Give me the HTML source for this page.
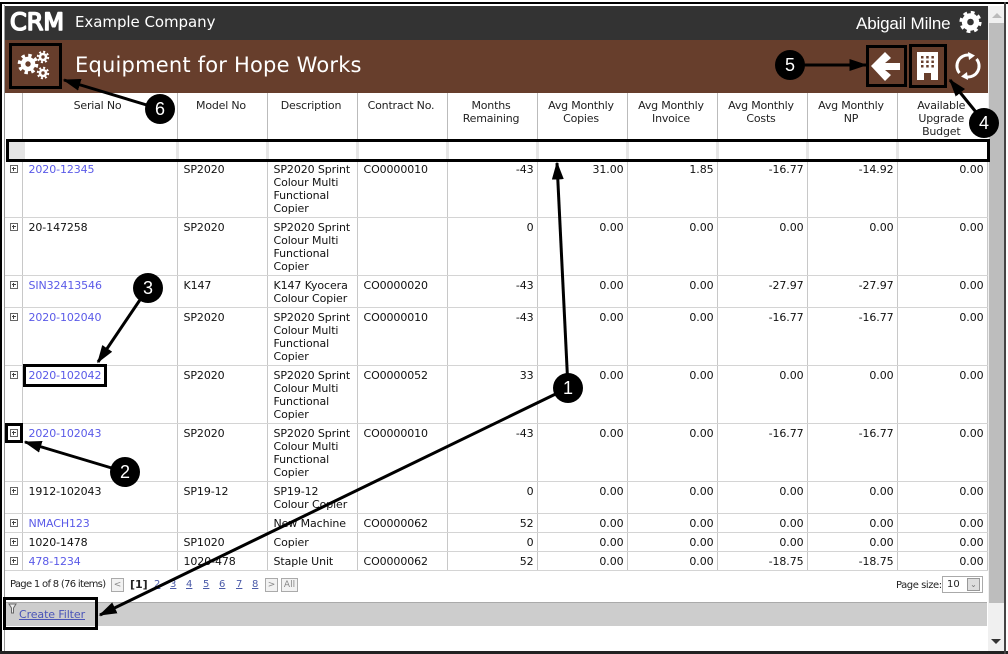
<!DOCTYPE html>
<html><head><meta charset="utf-8">
<style>
html,body{margin:0;padding:0;background:#fff}
#p{position:relative;width:1008px;height:654px;overflow:hidden;background:#fff;font-family:"DejaVu Sans",sans-serif;font-size:11px;color:#111}
.a{position:absolute}
table{position:absolute;left:5px;top:93px;width:982px;table-layout:fixed;border-collapse:collapse;font-size:11px;line-height:13px;letter-spacing:-.1px}
td,th{padding:3px 3px 0 6px;vertical-align:top;border-right:1px solid #c8c8c8;border-bottom:1px solid #d4d4d4;overflow:hidden;box-sizing:border-box}
td:first-child{padding-left:5px;padding-right:0}
th{font-weight:normal;text-align:center;border-bottom:0;border-right:1px solid #bbb;padding:6px 8px 0 6px;color:#222;letter-spacing:-.2px}
.n{text-align:right;padding-right:3px;padding-left:0}
.f td{padding:0;border-right:3px solid #e6e6e6;border-bottom:0}
a{color:#5a5ae8;text-decoration:none}
.ex{display:block;width:6px;height:6px;border:1px solid #666;position:relative;margin:2px 0 0 0}
.ex:before{content:"";position:absolute;left:1px;right:1px;top:2px;height:1px;background:#444}
.ex:after{content:"";position:absolute;top:1px;bottom:1px;left:2px;width:1px;background:#444}
.b{position:absolute;border:3px solid #000;box-sizing:border-box}
.c{position:absolute;width:30px;height:30px;border-radius:50%;background:#000;color:#fff;font:18px/30px "Liberation Sans",sans-serif;text-align:center}
.pg{position:absolute;top:578px;font-size:10px;line-height:13px;color:#44a}
.pg u{color:#4a5aa8}
.btn{position:absolute;top:578px;height:12px;border:1px solid #aaa;background:#f2f2f2;box-sizing:content-box;color:#888;font-size:9px;line-height:12px;text-align:center}
</style></head><body>
<div id="p">
<!-- window frame -->
<div class="a" style="left:0;top:2px;width:1008px;height:2px;background:#000"></div>
<div class="a" style="left:0;top:2px;width:2px;height:652px;background:#000"></div>
<div class="a" style="left:4px;top:5px;width:1px;height:646px;background:#999"></div>
<div class="a" style="left:0;top:651px;width:1008px;height:3px;background:#222"></div>
<div class="a" style="left:1004px;top:2px;width:2px;height:652px;background:#444"></div>
<!-- scrollbar -->
<div class="a" style="left:988px;top:6px;width:16px;height:645px;background:#f0f0f0"></div>
<div class="a" style="left:989px;top:23px;width:15px;height:580px;background:#bdbdbd"></div>
<div class="a" style="left:992px;top:13px;border:5px solid transparent;border-top:0;border-bottom:5px solid #bbb"></div>
<div class="a" style="left:991px;top:639px;border:5px solid transparent;border-bottom:0;border-top:5px solid #333"></div>
<!-- top bar -->
<div class="a" style="left:5px;top:6px;width:983px;height:34px;background:#333"></div>
<svg class="a" style="left:9px;top:8px" width="58" height="28"><text x="1" y="22" font-family="DejaVu Sans" font-size="24" fill="#fff" stroke="#fff" stroke-width="1.6" stroke-linejoin="round" textLength="54" lengthAdjust="spacingAndGlyphs">CRM</text></svg>
<div class="a" style="left:75px;top:12px;font-size:15px;line-height:20px;color:#fff;white-space:nowrap;letter-spacing:-.05px">Example Company</div>
<div class="a" style="left:856px;top:13px;font:17px/22px 'Liberation Sans',sans-serif;color:#fff;white-space:nowrap;letter-spacing:-.15px">Abigail Milne</div>
<svg class="a" style="left:958px;top:10px" width="25" height="25" viewBox="0 0 25 25"><circle cx="12.5" cy="12" r="6" fill="none" stroke="#fff" stroke-width="5.4"/><circle cx="12.5" cy="12" r="9.4" fill="none" stroke="#fff" stroke-width="3.4" stroke-dasharray="3.7 3.68"/></svg>
<!-- brown bar -->
<div class="a" style="left:5px;top:40px;width:983px;height:53px;background:#673e2c"></div>
<div class="a" style="left:75px;top:52px;font-size:21px;line-height:27px;color:#fff;white-space:nowrap;letter-spacing:.2px">Equipment for Hope Works</div>
<svg class="a" style="left:15px;top:47px" width="40" height="38" viewBox="0 0 40 38">
<g fill="none" stroke="#fff"><circle cx="13" cy="17" r="5" stroke-width="4.6"/><circle cx="13" cy="17" r="8.6" stroke-width="3.4" stroke-dasharray="3.4 3.35"/>
<circle cx="28" cy="10" r="3" stroke-width="2.6"/><circle cx="28" cy="10" r="5.2" stroke-width="2" stroke-dasharray="2.05 2.03"/>
<circle cx="28" cy="26" r="3" stroke-width="2.6"/><circle cx="28" cy="26" r="5.2" stroke-width="2" stroke-dasharray="2.05 2.03"/></g></svg>
<svg class="a" style="left:866px;top:45px" width="41" height="42"><path d="M5 21 L19 7 L25 13 L19 18 H34 V25 H19 L25 30 L19 36 Z" fill="#fff"/></svg>
<svg class="a" style="left:909px;top:44px" width="38" height="44"><path fill-rule="evenodd" fill="#fff" d="M8 8H29V36H22V29H15V36H8Z M12 12v2.500h2.500v-2.500z M17.200 12v2.500h2.500v-2.500z M22.400 12v2.500h2.500v-2.500z M12 16.500v2.500h2.500v-2.500z M17.200 16.500v2.500h2.500v-2.500z M22.400 16.500v2.500h2.500v-2.500z M12 21v2.500h2.500v-2.500z M17.200 21v2.500h2.500v-2.500z M22.400 21v2.500h2.500v-2.500z"/></svg>
<svg class="a" style="left:952px;top:50px" width="32" height="32" viewBox="0 0 32 32"><g fill="none" stroke="#fff" stroke-width="3"><path d="M7.500 23A11 11 0 0 1 17 5"/><path d="M24.500 9A11 11 0 0 1 15 27"/></g><path fill="#fff" d="M16 2L23 5.500L17 10Z M16 30L9 26.500L15 22Z"/></svg>

<table>
<colgroup><col style="width:17px"><col style="width:155px"><col style="width:90px"><col style="width:90px"><col style="width:90px"><col style="width:90px"><col style="width:90px"><col style="width:90px"><col style="width:90px"><col style="width:90px"><col style="width:90px"></colgroup>
<tr style="height:46px"><th></th><th style="padding-right:10px">Serial No</th><th>Model No</th><th>Description</th><th>Contract No.</th><th>Months Remaining</th><th>Avg Monthly Copies</th><th>Avg Monthly Invoice</th><th>Avg Monthly Costs</th><th>Avg Monthly NP</th><th style="border-right:0">Available Upgrade Budget</th></tr>
<tr class="f" style="height:21px"><td></td><td></td><td></td><td></td><td></td><td></td><td></td><td></td><td></td><td></td><td style="border-right:0"></td></tr>
<tr style="height:57px"><td><i class="ex"></i></td><td><a>2020-12345</a></td><td>SP2020</td><td>SP2020 Sprint Colour Multi Functional Copier</td><td>CO0000010</td><td class="n">-43</td><td class="n">31.00</td><td class="n">1.85</td><td class="n">-16.77</td><td class="n">-14.92</td><td class="n">0.00</td></tr>
<tr style="height:58px"><td><i class="ex"></i></td><td>20-147258</td><td>SP2020</td><td>SP2020 Sprint Colour Multi Functional Copier</td><td></td><td class="n">0</td><td class="n">0.00</td><td class="n">0.00</td><td class="n">0.00</td><td class="n">0.00</td><td class="n">0.00</td></tr>
<tr style="height:32px"><td><i class="ex"></i></td><td><a>SIN32413546</a></td><td>K147</td><td>K147 Kyocera Colour Copier</td><td>CO0000020</td><td class="n">-43</td><td class="n">0.00</td><td class="n">0.00</td><td class="n">-27.97</td><td class="n">-27.97</td><td class="n">0.00</td></tr>
<tr style="height:58px"><td><i class="ex"></i></td><td><a>2020-102040</a></td><td>SP2020</td><td>SP2020 Sprint Colour Multi Functional Copier</td><td>CO0000010</td><td class="n">-43</td><td class="n">0.00</td><td class="n">0.00</td><td class="n">-16.77</td><td class="n">-16.77</td><td class="n">0.00</td></tr>
<tr style="height:58px"><td><i class="ex"></i></td><td><a>2020-102042</a></td><td>SP2020</td><td>SP2020 Sprint Colour Multi Functional Copier</td><td>CO0000052</td><td class="n">33</td><td class="n">0.00</td><td class="n">0.00</td><td class="n">0.00</td><td class="n">0.00</td><td class="n">0.00</td></tr>
<tr style="height:58px"><td><i class="ex"></i></td><td><a>2020-102043</a></td><td>SP2020</td><td>SP2020 Sprint Colour Multi Functional Copier</td><td>CO0000010</td><td class="n">-43</td><td class="n">0.00</td><td class="n">0.00</td><td class="n">-16.77</td><td class="n">-16.77</td><td class="n">0.00</td></tr>
<tr style="height:32px"><td><i class="ex"></i></td><td>1912-102043</td><td>SP19-12</td><td>SP19-12 Colour Copier</td><td></td><td class="n">0</td><td class="n">0.00</td><td class="n">0.00</td><td class="n">0.00</td><td class="n">0.00</td><td class="n">0.00</td></tr>
<tr style="height:19px"><td><i class="ex"></i></td><td><a>NMACH123</a></td><td></td><td>New Machine</td><td>CO0000062</td><td class="n">52</td><td class="n">0.00</td><td class="n">0.00</td><td class="n">0.00</td><td class="n">0.00</td><td class="n">0.00</td></tr>
<tr style="height:19px"><td><i class="ex"></i></td><td>1020-1478</td><td>SP1020</td><td>Copier</td><td></td><td class="n">0</td><td class="n">0.00</td><td class="n">0.00</td><td class="n">0.00</td><td class="n">0.00</td><td class="n">0.00</td></tr>
<tr style="height:19px"><td><i class="ex"></i></td><td><a>478-1234</a></td><td>1020-478</td><td>Staple Unit</td><td>CO0000062</td><td class="n">52</td><td class="n">0.00</td><td class="n">0.00</td><td class="n">-18.75</td><td class="n">-18.75</td><td class="n">0.00</td></tr>
</table>
<div class="a" style="left:9px;top:141px;width:16px;height:18px;background:#e4e4e4"></div>

<!-- pager -->
<div class="a" style="left:10px;top:578px;font:10px/13px 'DejaVu Sans',sans-serif;letter-spacing:-.7px;color:#222;white-space:nowrap">Page 1 of 8 (76 items)</div>
<div class="btn" style="left:111px;width:11px">&lt;</div>
<div class="pg" style="left:130px;color:#222;font-weight:bold;font-size:11px;white-space:nowrap">[1]</div>
<div class="pg" style="left:154px"><u>2</u></div><div class="pg" style="left:170px"><u>3</u></div><div class="pg" style="left:186px"><u>4</u></div><div class="pg" style="left:203px"><u>5</u></div><div class="pg" style="left:219px"><u>6</u></div><div class="pg" style="left:236px"><u>7</u></div><div class="pg" style="left:252px"><u>8</u></div>
<div class="btn" style="left:265px;width:11px">&gt;</div>
<div class="btn" style="left:281px;width:15px">All</div>
<div class="a" style="left:896px;top:579px;font:10px/13px 'DejaVu Sans',sans-serif;letter-spacing:-.45px;color:#222;white-space:nowrap">Page size:</div>
<div class="a" style="left:942px;top:576px;width:39px;height:15px;border:1px solid #aaa;background:#fff;font-size:10px;line-height:16px;text-indent:4px;color:#222">10</div>
<div class="a" style="left:967px;top:578px;width:13px;height:13px;background:#ddd;border:1px solid #999;box-sizing:border-box;font-size:8px;line-height:11px;text-align:center;color:#777">&#8964;</div>

<!-- filter bar -->
<div class="a" style="left:5px;top:602px;width:982px;height:24px;background:#cdcdcd;border-top:1px solid #aaa;box-sizing:border-box"></div>
<svg class="a" style="left:8px;top:603px" width="10" height="12"><path d="M1 1H8L5.500 5V10H3.500V5Z" fill="#eee" stroke="#666"/></svg>
<div class="a" style="left:19px;top:608px;font-size:11px;line-height:14px;letter-spacing:-.1px;color:#4a55b8;text-decoration:underline;white-space:nowrap">Create Filter</div>

<!-- annotation boxes -->
<div class="b" style="left:9px;top:43px;width:53px;height:46px"></div>
<div class="b" style="left:866px;top:45px;width:41px;height:42px"></div>
<div class="b" style="left:909px;top:44px;width:38px;height:44px"></div>
<div class="b" style="left:6px;top:139px;width:984px;height:23px"></div>
<div class="b" style="left:23px;top:364px;width:84px;height:23px"></div>
<div class="b" style="left:5px;top:423px;width:18px;height:20px"></div>
<div class="b" style="left:3px;top:597px;width:95px;height:33px"></div>

<!-- arrows -->
<svg class="a" style="left:0;top:0" width="1008" height="654">
<defs><marker id="m" markerWidth="6" markerHeight="4" refX="5.500" refY="2" orient="auto" markerUnits="strokeWidth"><path d="M0 0L6 2L0 4Z" fill="#000"/></marker></defs>
<g stroke="#000" stroke-width="3" fill="none">
<line x1="568" y1="388" x2="557" y2="163" marker-end="url(#m)"/>
<line x1="568" y1="388" x2="100" y2="615" marker-end="url(#m)"/>
<line x1="125" y1="472" x2="25" y2="442" marker-end="url(#m)"/>
<line x1="148" y1="288" x2="98" y2="362" marker-end="url(#m)"/>
<line x1="984" y1="122" x2="950" y2="80" marker-end="url(#m)"/>
<line x1="790" y1="65" x2="866" y2="65" marker-end="url(#m)"/>
<line x1="160" y1="109" x2="64" y2="80" marker-end="url(#m)"/>
</g></svg>
<div class="c" style="left:553px;top:373px">1</div>
<div class="c" style="left:110px;top:457px">2</div>
<div class="c" style="left:133px;top:273px">3</div>
<div class="c" style="left:969px;top:108px">4</div>
<div class="c" style="left:775px;top:50px">5</div>
<div class="c" style="left:145px;top:94px">6</div>
</div>
</body></html>
